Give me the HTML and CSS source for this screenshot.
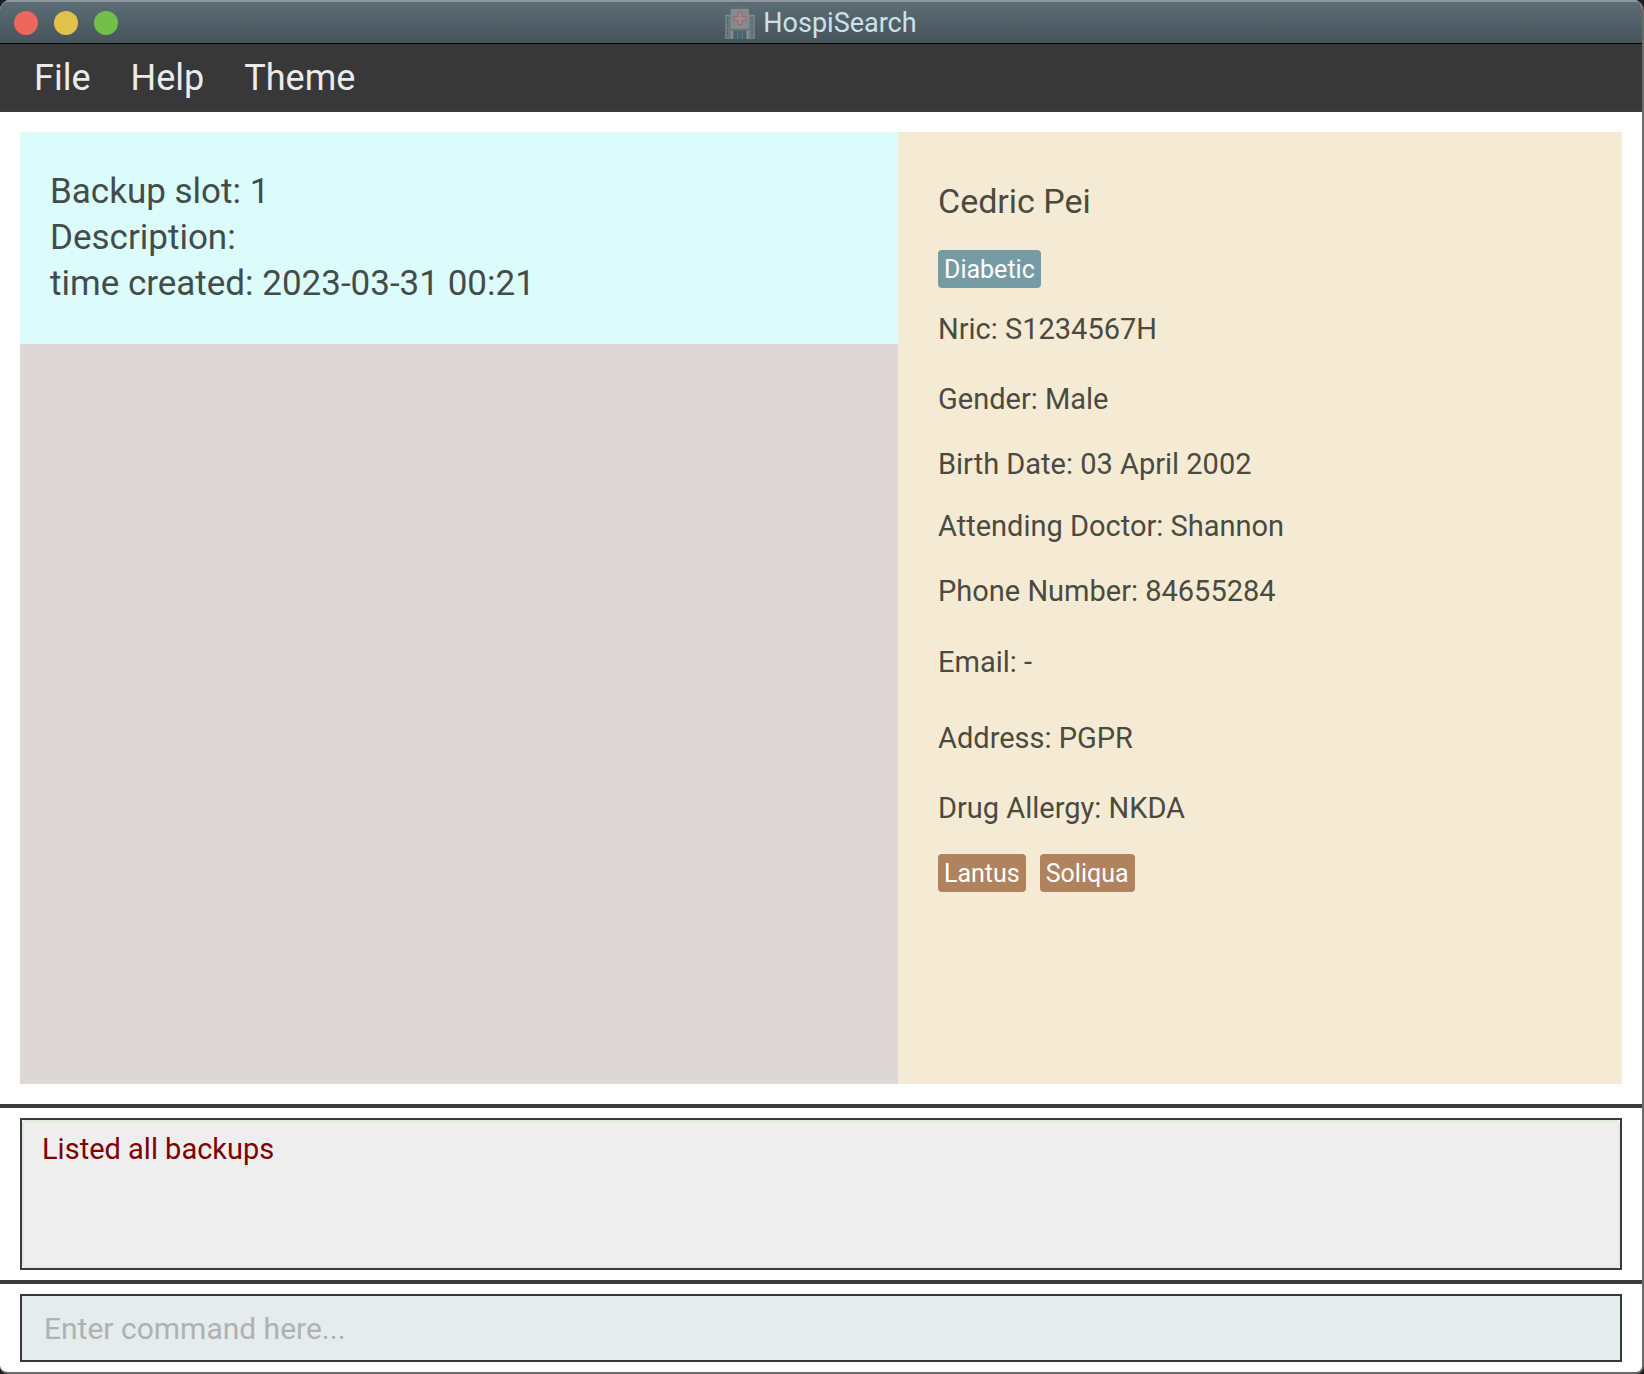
FILE: index.html
```html
<!DOCTYPE html>
<html lang="en">
<head>
  <meta charset="utf-8">
  <meta name="viewport" content="width=device-width, initial-scale=1">
  <title>HospiSearch</title>
  <link rel="stylesheet" href="styles.css">
</head>
<body>
  <div class="window">
    <header class="titlebar">
      <div class="window-controls">
        <button class="control control-close" type="button" aria-label="Close"></button>
        <button class="control control-minimise" type="button" aria-label="Minimise"></button>
        <button class="control control-zoom" type="button" aria-label="Zoom"></button>
      </div>
      <div class="window-title">
        <svg class="app-icon" viewBox="0 0 90 99" aria-hidden="true">
          <path fill="#707c80" d="M0 26h17v73H0zM72 26h18v73H72z"/>
          <path fill="#808b8e" d="M0 26h17v5H0zM72 26h18v5H72z"/>
          <path stroke="#4c6772" stroke-width="4" stroke-dasharray="8 3" d="M8 34v60M81 34v60"/>
          <path fill="#646e70" d="M20 1h50v9H20z"/>
          <path fill="#838c8f" d="M17 9h55v90H17z"/>
          <path fill="#69757a" d="M17 68h55v6H17z"/>
          <path fill="#48636f" d="M25 74h39v25H25z"/>
          <path fill="#62767e" d="M36 76h3v23h-3zM50 76h3v23h-3z"/>
          <path fill="#8d9597" stroke="#a5686c" stroke-width="4" d="M39 19h11v13h13v11H50v13H39V43H26V32h13z"/>
        </svg>
        <span>HospiSearch</span>
      </div>
    </header>

    <nav class="menubar" aria-label="Main menu">
      <button class="menu" type="button">File</button>
      <button class="menu" type="button">Help</button>
      <button class="menu" type="button">Theme</button>
    </nav>

    <main class="panes">
      <section class="backup-list" aria-label="Backups">
        <article class="backup-card">
          <p>Backup slot: 1</p>
          <p>Description:</p>
          <p>time created: 2023-03-31 00:21</p>
        </article>
      </section>

      <section class="patient" aria-label="Patient details">
        <h1 class="patient-name">Cedric Pei</h1>
        <div class="tags"><span class="tag tag-condition">Diabetic</span></div>
        <div class="patient-fields">
          <p>Nric: S1234567H</p>
          <p>Gender: Male</p>
          <p>Birth Date: 03 April 2002</p>
          <p>Attending Doctor: Shannon</p>
          <p>Phone Number: 84655284</p>
          <p>Email: -</p>
          <p>Address: PGPR</p>
          <p>Drug Allergy: NKDA</p>
        </div>
        <div class="tags">
          <span class="tag tag-medication">Lantus</span>
          <span class="tag tag-medication">Soliqua</span>
        </div>
      </section>
    </main>

    <section class="strip">
      <div class="result-frame">
        <textarea class="result" aria-label="Result" readonly>Listed all backups</textarea>
      </div>
    </section>

    <form class="strip">
      <input class="command" type="text" aria-label="Command" placeholder="Enter command here...">
    </form>
  </div>
</body>
</html>
```
FILE: styles.css
```css
* {
  box-sizing: border-box;
}

body {
  margin: 0;
  background: #1c1c1e;
  font-family: Roboto, "Liberation Sans", sans-serif;
}

button,
input,
textarea {
  font-family: inherit;
}

p,
h1 {
  margin: 0;
  font-weight: 400;
}

.window {
  display: flex;
  flex-direction: column;
  min-height: 100vh;
  overflow: hidden;
  background: #ffffff;
  border-right: 2px solid #6a6a69;
  border-bottom: 2px solid #6a6a69;
  border-radius: 10px 10px 8px 8px;
}

/* Title bar */

.titlebar {
  display: grid;
  grid-template-columns: 1fr auto 1fr;
  align-items: center;
  height: 44px;
  padding: 0 14px;
  background: linear-gradient(#5c6d75, #46545b);
  border-top: 2px solid #8b989d;
  border-bottom: 1px solid #000000;
}

.window-controls {
  display: flex;
  gap: 16px;
}

.control {
  width: 24px;
  height: 24px;
  padding: 0;
  border: 0;
  border-radius: 50%;
}

.control-close {
  background: #ee675c;
}

.control-minimise {
  background: #e1c04c;
}

.control-zoom {
  background: #73c048;
}

.window-title {
  display: flex;
  align-items: center;
  gap: 8px;
  color: #cfe0e7;
  font-size: 27px;
  line-height: 32px;
}

.app-icon {
  width: 30px;
  height: 33px;
}

/* Menu bar */

.menubar {
  display: flex;
  height: 68px;
  padding: 0 14px;
  background: #383838;
  border-bottom: 2px solid #3c3c3c;
}

.menu {
  padding: 2px 20px 0;
  border: 0;
  background: none;
  color: #ebebeb;
  font-size: 36px;
  line-height: 40px;
}

/* Backup list and patient details */

.panes {
  display: grid;
  grid-template-columns: 439fr 362fr;
  flex: 1;
  padding: 20px;
}

.backup-list {
  background: #ddd8d5;
}

.backup-card {
  padding: 37px 30px;
  background: #dcfcfb;
  color: #444c4b;
  font-size: 35px;
  line-height: 46px;
}

.patient {
  padding: 49px 40px;
  background: #f5ebd4;
  color: #4b4a41;
}

.patient-name {
  margin-bottom: 29px;
  font-size: 34px;
  line-height: 40px;
}

.patient-fields {
  display: grid;
  grid-template-rows: 70px 65px 62px 65px 71px 76px 70px 36px;
  margin: 23px 0 28px;
  font-size: 29px;
  line-height: 36px;
}

.tags {
  display: flex;
  gap: 14px;
}

.tag {
  padding: 5px 6px 3px;
  border-radius: 4px;
  color: #ffffff;
  font-size: 25px;
  line-height: 30px;
}

.tag-condition {
  background: #759ca5;
}

.tag-medication {
  background: #b0835e;
}

/* Result and command strips */

.strip {
  padding: 10px 20px;
  border-top: 4px solid #3c3c3c;
}

.result-frame {
  height: 152px;
  border: 2px solid #3a3a3a;
}

.result {
  display: block;
  width: 100%;
  height: 100%;
  padding: 9px 18px;
  border: 2px solid #dceedb;
  border-radius: 4px;
  background: #eeeeee;
  color: #800000;
  font-size: 29px;
  line-height: 36px;
  outline: 0;
  resize: none;
}

.command {
  display: block;
  width: 100%;
  height: 68px;
  padding: 1px 22px 0;
  border: 2px solid #383838;
  border-radius: 0;
  background: #e4ecee;
  color: #383838;
  font-size: 30px;
  outline: 0;
}

.command::placeholder {
  color: #b1b1b1;
  opacity: 1;
}
```
